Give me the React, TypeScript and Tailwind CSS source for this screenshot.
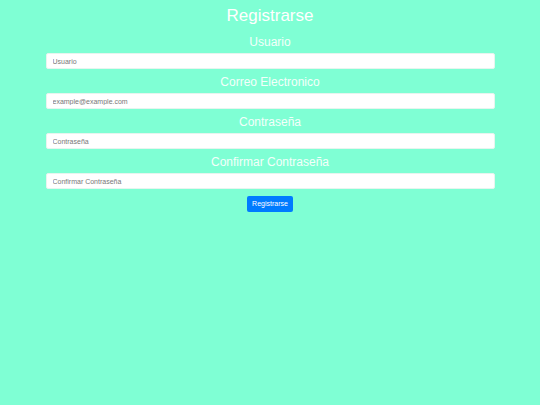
const fields = [
  { label: "Usuario", placeholder: "Usuario", type: "text" },
  { label: "Correo Electronico", placeholder: "example@example.com", type: "email" },
  { label: "Contraseña", placeholder: "Contraseña", type: "password" },
  { label: "Confirmar Contraseña", placeholder: "Confirmar Contraseña", type: "password" },
];

export default function App() {
  return (
    <div
      className="min-h-[405px] w-full bg-[#7fffd4] pt-[6px] text-center"
      style={{ fontFamily: '"Liberation Sans", Arial, sans-serif' }}
    >
      <h1 className="text-[17px] leading-[20px] text-white">Registrarse</h1>
      <form className="mx-auto mt-[3px] flex w-[449px] flex-col">
        {fields.map((f) => (
          <div key={f.label} className="mt-[5px] flex flex-col">
            <label className="mb-[3px] text-[12px] leading-[16px] text-[#f4fffb]">
              {f.label}
            </label>
            <input
              type={f.type}
              placeholder={f.placeholder}
              className="h-[16px] w-full rounded-[2px] border border-[#e6f5ef] bg-white px-[6px] text-[7px] text-gray-700 placeholder:text-[#777777] outline-none"
            />
          </div>
        ))}
        <div className="mt-[7px] flex justify-center">
          <button
            type="button"
            className="h-[16px] w-[46px] rounded-[2px] bg-[#007bff] text-[7px] text-white"
          >
            Registrarse
          </button>
        </div>
      </form>
    </div>
  );
}
